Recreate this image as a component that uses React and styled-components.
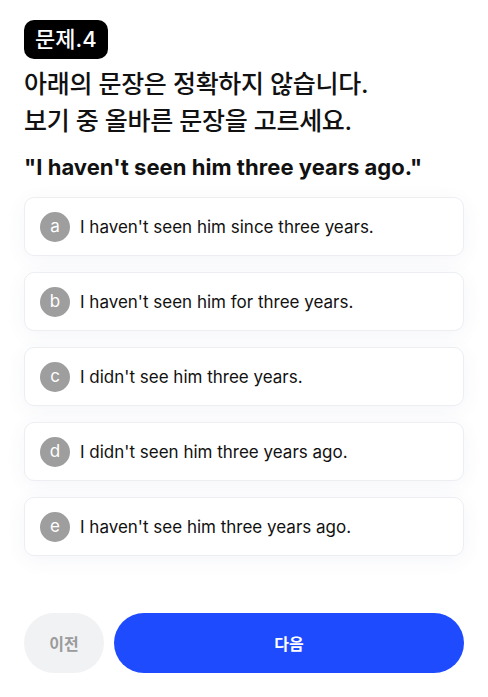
import React from "react";
import styled, { createGlobalStyle } from "styled-components";

const Global = createGlobalStyle`
  html, body { margin: 0; padding: 0; background: #fff; }
  body { font-family: Inter, "Noto Sans CJK KR", sans-serif; color: #111; }
`;

const Page = styled.div`
  width: 488px;
  height: 697px;
  box-sizing: border-box;
  padding: 20px 24px 24px;
  display: flex;
  flex-direction: column;
`;

const Badge = styled.div`
  align-self: flex-start;
  background: #000;
  color: #fff;
  font-size: 22px;
  font-weight: 500;
  line-height: 39px;
  height: 39px;
  padding: 0 11px;
  border-radius: 10px;
`;

const Title = styled.h1`
  margin: 7px 0 0;
  font-size: 25px;
  font-weight: 500;
  line-height: 37px;
  color: #111;
  letter-spacing: -0.3px;
`;

const Quote = styled.p`
  margin: 12px 0 0;
  font-size: 22px;
  font-weight: 700;
  line-height: 30px;
  color: #111;
  letter-spacing: 0.05px;
`;

const List = styled.div`
  margin-top: 15px;
  display: flex;
  flex-direction: column;
  gap: 16px;
`;

const Option = styled.div`
  height: 59px;
  box-sizing: border-box;
  border: 1px solid #eceef2;
  border-radius: 10px;
  background: #fff;
  box-shadow: 0 4px 20px rgba(60, 80, 160, 0.06);
  display: flex;
  align-items: center;
  padding: 0 15px;
  gap: 10px;
`;

const Letter = styled.span`
  width: 30px;
  height: 30px;
  border-radius: 50%;
  background: #9e9e9e;
  color: #fff;
  font-size: 17px;
  display: flex;
  align-items: center;
  justify-content: center;
  flex-shrink: 0;
  padding-bottom: 1px;
  box-sizing: border-box;
`;

const OptionText = styled.span`
  font-size: 17px;
  color: #111;
`;

const Footer = styled.div`
  margin-top: auto;
  display: flex;
  gap: 10px;
`;

const Button = styled.button`
  height: 60px;
  border: none;
  border-radius: 30px;
  font-family: inherit;
  font-size: 16px;
  font-weight: 700;
  background: ${(p) => (p.$primary ? "#1f4bff" : "#f1f2f4")};
  color: ${(p) => (p.$primary ? "#fff" : "#9b9b9b")};
  flex: ${(p) => (p.$primary ? "1" : "0 0 80px")};
`;

const options = [
  ["a", "I haven't seen him since three years."],
  ["b", "I haven't seen him for three years."],
  ["c", "I didn't see him three years."],
  ["d", "I didn't seen him three years ago."],
  ["e", "I haven't see him three years ago."],
];

export default function App() {
  return (
    <>
      <Global />
      <Page>
        <Badge>문제.4</Badge>
        <Title>
          아래의 문장은 정확하지 않습니다.
          <br />
          보기 중 올바른 문장을 고르세요.
        </Title>
        <Quote>"I haven't seen him three years ago."</Quote>
        <List>
          {options.map(([k, t]) => (
            <Option key={k}>
              <Letter>{k}</Letter>
              <OptionText>{t}</OptionText>
            </Option>
          ))}
        </List>
        <Footer>
          <Button>이전</Button>
          <Button $primary>다음</Button>
        </Footer>
      </Page>
    </>
  );
}
